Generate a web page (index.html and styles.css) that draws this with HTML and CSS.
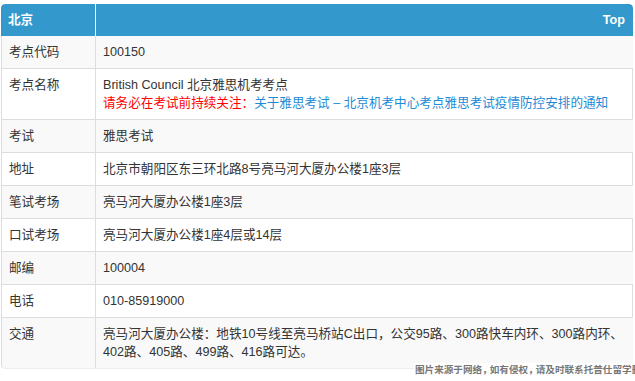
FILE: index.html
```html
<!DOCTYPE html>
<html lang="zh-CN">
<head>
<meta charset="utf-8">
<title>北京考点</title>
<link rel="stylesheet" href="styles.css">
</head>
<body>
<div class="page">
  <table class="info">
    <thead>
      <tr><th class="k">北京</th><th class="v top">Top</th></tr>
    </thead>
    <tbody>
      <tr class="odd"><td class="k">考点代码</td><td class="v">100150</td></tr>
      <tr><td class="k">考点名称</td><td class="v">British Council 北京雅思机考考点<br><span class="red">请务必在考试前持续关注：</span><span class="link">关于雅思考试 – 北京机考中心考点雅思考试疫情防控安排的通知</span></td></tr>
      <tr class="odd"><td class="k">考试</td><td class="v">雅思考试</td></tr>
      <tr><td class="k">地址</td><td class="v">北京市朝阳区东三环北路8号亮马河大厦办公楼1座3层</td></tr>
      <tr class="odd"><td class="k">笔试考场</td><td class="v">亮马河大厦办公楼1座3层</td></tr>
      <tr><td class="k">口试考场</td><td class="v">亮马河大厦办公楼1座4层或14层</td></tr>
      <tr class="odd"><td class="k">邮编</td><td class="v">100004</td></tr>
      <tr><td class="k">电话</td><td class="v">010-85919000</td></tr>
      <tr class="odd last"><td class="k">交通</td><td class="v">亮马河大厦办公楼：地铁10号线至亮马桥站C出口，公交95路、300路快车内环、300路内环、<br>402路、405路、499路、416路可达。</td></tr>
    </tbody>
  </table>
  <div class="mark">图片来源于网络<span class="c">，</span>如有侵权<span class="c">，</span>请及时联系托普仕留学删除</div>
</div>
</body>
</html>
```

FILE: styles.css
```css
html, body {
  margin: 0;
  padding: 0;
  background: #fff;
  overflow: hidden;
}
body {
  font-family: "Liberation Sans", "Noto Sans CJK SC", sans-serif;
  font-size: 12.6px;
  line-height: 18px;
  color: #333;
}
.page {
  position: relative;
  width: 635px;
  height: 381px;
  padding: 4px 0 0 1px;
  box-sizing: border-box;
}
.info {
  width: 632px;
  border-collapse: separate;
  border-spacing: 0;
  border-radius: 4px;
  overflow: hidden;
}
.info th, .info td {
  padding: 7px 7px;
  text-align: left;
  vertical-align: top;
}
.info th {
  background: #3399cc;
  color: #fff;
  font-weight: bold;
}
.info th.k {
  border-right: 1px solid #fff;
  border-top-left-radius: 4px;
}
.info th.top {
  text-align: right;
  padding-right: 8px;
  border-top-right-radius: 4px;
}
.info .k {
  width: 79px;
}
.info td.k {
  border-left: 1px solid #ddd;
  border-right: 1px solid #ddd;
}
.info td.v {
  border-right: 1px solid #ddd;
}
.info tbody tr + tr td {
  border-top: 1px solid #ddd;
}
.info tr.odd td {
  background: #f9f9f9;
}
.info tr.odd td.v {
  border-right-color: #f9f9f9;
}
.info tr.last td {
  border-bottom: 1px solid #eee;
}
.info tr.last td.k {
  border-bottom-left-radius: 4px;
}
.red {
  color: #ff0000;
}
.link {
  color: #1e8bd6;
}
.mark {
  position: absolute;
  left: 414px;
  top: 363px;
  padding: 1px 0 2px 1px;
  background: #fff;
  color: #777;
  font-size: 9.6px;
  line-height: 12px;
  font-weight: bold;
  white-space: nowrap;
}
.mark .c {
  letter-spacing: -2px;
}
```
